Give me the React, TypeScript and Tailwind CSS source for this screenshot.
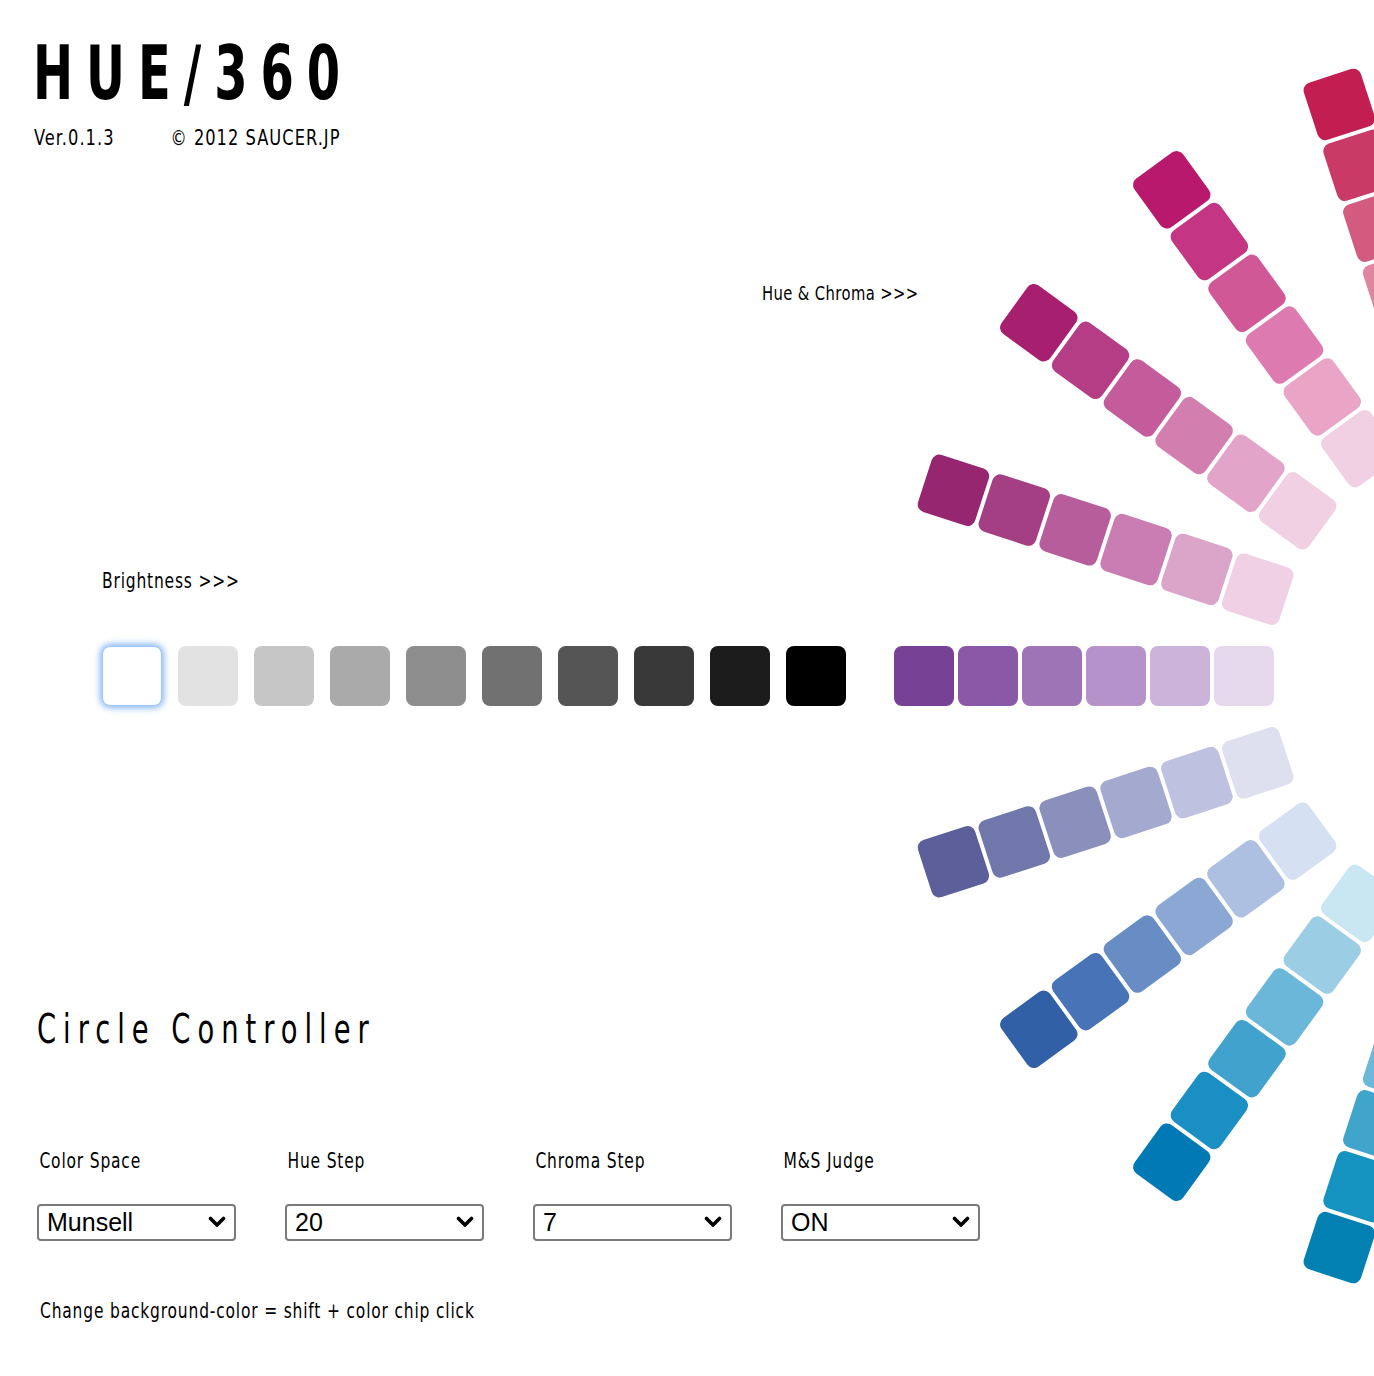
import React from "react";

const grays = [
  "#ffffff",
  "#e2e2e2",
  "#c6c6c6",
  "#aaaaaa",
  "#8e8e8e",
  "#717171",
  "#555555",
  "#393939",
  "#1c1c1c",
  "#000000",
];

// rows of the hue circle, j = step up from the horizontal row (18deg each)
const hueRows = [
  { j: 4, colors: ["#c21e52", "#c93a67", "#d35b80", "#e085a0", "#eaaec2", "#f4d6e1"] },
  { j: 3, colors: ["#b8196c", "#c43584", "#d05897", "#dd7aaf", "#e9a4c6", "#f2d0e3"] },
  { j: 2, colors: ["#a72070", "#b53d86", "#c45c9c", "#d27fb0", "#e2a5c9", "#f1d0e3"] },
  { j: 1, colors: ["#96266f", "#a43f84", "#b75d9b", "#ca7db3", "#dba5ca", "#efd0e5"] },
  { j: 0, colors: ["#774195", "#8a58a7", "#9f74b6", "#b592c9", "#cbb3da", "#e6d8ec"] },
  { j: -1, colors: ["#5c5f99", "#7077ab", "#8a8fbc", "#a3a9cf", "#bec1df", "#dee0f0"] },
  { j: -2, colors: ["#3260a7", "#4874b7", "#688dc5", "#8aa8d3", "#adc0e2", "#d5e1f2"] },
  { j: -3, colors: ["#0079b5", "#1a8fc3", "#40a2cd", "#6bb7d9", "#9bcde5", "#c9e6f3"] },
  { j: -4, colors: ["#0180b1", "#1593c0", "#41a5cb", "#6bb8d8", "#9bcde4", "#c9e6f1"] },
];

const controls = [
  { label: "Color Space", value: "Munsell", options: ["Munsell", "HSV", "Lab"] },
  { label: "Hue Step", value: "20", options: ["10", "20", "40"] },
  { label: "Chroma Step", value: "7", options: ["5", "7", "9"] },
  { label: "M&S Judge", value: "ON", options: ["ON", "OFF"] },
];

function HueCircle() {
  const cx = 1525;
  const cy = 676;
  return (
    <svg
      className="absolute left-0 top-0 pointer-events-none"
      width={1374}
      height={1376}
      viewBox="0 0 1374 1376"
    >
      {hueRows.map((row) => {
        const theta = 180 + 18 * row.j;
        const rad = (theta * Math.PI) / 180;
        return row.colors.map((c, k) => {
          const r = 601 - 64 * k;
          const x = cx + r * Math.cos(rad);
          const y = cy + r * Math.sin(rad);
          return (
            <rect
              key={row.j + "-" + k}
              x={x - 30}
              y={y - 30}
              width={60}
              height={60}
              rx={8}
              fill={c}
              transform={`rotate(${theta} ${x} ${y})`}
            />
          );
        });
      })}
    </svg>
  );
}

function Chevron() {
  return (
    <svg width="18" height="12" viewBox="0 0 18 12" className="absolute right-[10px] top-[12px] pointer-events-none">
      <path d="M2.5 2.5 L9 9 L15.5 2.5" fill="none" stroke="#000" strokeWidth="3.6" strokeLinecap="round" strokeLinejoin="round" />
    </svg>
  );
}

export default function App() {
  return (
    <div className="relative w-[1374px] h-[1376px] overflow-hidden bg-white text-black font-['DejaVu_Sans_Condensed','Liberation_Sans_Narrow','Roboto',sans-serif]">
      <HueCircle />

      <div className="relative">
        {/* Header */}
        <header className="pl-[33px] pt-[36px]">
          <div>
            <h1 className="text-[74px] leading-none font-bold tracking-[18px] inline-block origin-left scale-x-[0.72]">
              HUE/360
            </h1>
          </div>
          <div className="mt-[18px] pl-[1px]">
            <div className="inline-flex text-[21px] leading-none tracking-[1.2px] origin-left scale-x-[0.86]">
              <span>Ver.0.1.3</span>
              <span className="ml-[65px]">© 2012 SAUCER.JP</span>
            </div>
          </div>
        </header>

        <div className="mt-[131px] pl-[762px]">
          <p className="text-[20px] leading-none tracking-[0.5px] inline-block origin-left scale-x-[0.82]">
            Hue &amp; Chroma &gt;&gt;&gt;
          </p>
        </div>

        <div className="pl-[102px]">
          <div className="mt-[264px]">
            <p className="text-[21px] leading-none tracking-[1px] inline-block origin-left scale-x-[0.82]">
              Brightness &gt;&gt;&gt;
            </p>
          </div>
          <div className="mt-[51px] flex gap-[16px]">
            {grays.map((g, i) => (
              <div
                key={g}
                className={
                  i === 0
                    ? "w-[60px] h-[60px] rounded-[8px] border border-[#9cc7ff] shadow-[0_0_6px_2px_rgba(80,150,255,0.7)]"
                    : "w-[60px] h-[60px] rounded-[8px]"
                }
                style={{ backgroundColor: g }}
              />
            ))}
          </div>
        </div>

        {/* Controller */}
        <section className="pl-[37px]">
          <div className="mt-[303px]">
            <h2 className="text-[40px] leading-none tracking-[9.2px] inline-block origin-left scale-x-[0.76]">
              Circle Controller
            </h2>
          </div>
          <div className="mt-[101px] flex gap-[50px]">
            {controls.map((c) => (
              <div key={c.label} className="w-[198px]">
                <p className="pl-[3px] text-[21px] leading-none tracking-[1px] inline-block origin-left scale-x-[0.82]">
                  {c.label}
                </p>
                <div className="relative mt-[29px] w-[199px]">
                  <select
                    defaultValue={c.value}
                    className="appearance-none w-full h-[37px] border-2 border-[#7a7a7a] rounded-[4px] bg-white pl-[8px] text-[25px] leading-none font-['Liberation_Sans',Arial,sans-serif] text-black"
                  >
                    {c.options.map((o) => (
                      <option key={o} value={o}>
                        {o}
                      </option>
                    ))}
                  </select>
                  <Chevron />
                </div>
              </div>
            ))}
          </div>
          <div className="mt-[60px] pl-[3px]">
            <p className="text-[21px] leading-none tracking-[1px] inline-block origin-left scale-x-[0.82]">
              Change background-color = shift + color chip click
            </p>
          </div>
        </section>
      </div>
    </div>
  );
}
